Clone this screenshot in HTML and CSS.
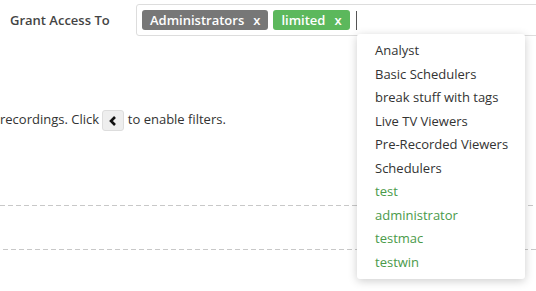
FILE: index.html
```html
<!DOCTYPE html>
<html lang="en">
<head>
    <meta charset="UTF-8">
    <title>Grant Access</title>
    <link rel="stylesheet" href="styles.css">
</head>
<body>

<div class="access-row">
    <label class="access-label">Grant Access To</label>
    <div class="tag-input">
        <span class="tag tag-group">Administrators <span class="tag-x">x</span></span>
        <span class="tag tag-user">limited <span class="tag-x">x</span></span>
        <span class="caret"></span>

        <ul class="dropdown">
            <li>Analyst</li>
            <li>Basic Schedulers</li>
            <li>break stuff with tags</li>
            <li>Live TV Viewers</li>
            <li>Pre-Recorded Viewers</li>
            <li>Schedulers</li>
            <li class="user">test</li>
            <li class="user">administrator</li>
            <li class="user">testmac</li>
            <li class="user">testwin</li>
        </ul>
    </div>
</div>

<p class="hint">recordings. Click <span class="btn-back"><svg width="8" height="10" viewBox="0 0 8 10"><path d="M6 1 L2 5 L6 9" fill="none" stroke="#111" stroke-width="2.6"/></svg></span> to enable filters.</p>

<div class="dash first"></div>
<div class="dash second"></div>

</body>
</html>
```

FILE: styles.css
```css
html, body {
    margin: 0;
    overflow: hidden;
}
body {
    font-family: "Open Sans", sans-serif;
    font-size: 13px;
    color: #333;
    width: 536px;
    height: 291px;
}
.access-row {
    display: flex;
    align-items: center;
    padding-top: 4px;
}
.access-label {
    flex-shrink: 0;
    width: 126px;
    padding-left: 10px;
    font-weight: 600;
    font-size: 13px;
    color: #444;
}
.tag-input {
    position: relative;
    flex-shrink: 0;
    display: flex;
    align-items: center;
    gap: 5px;
    width: 420px;
    height: 32px;
    box-sizing: border-box;
    padding: 0 5px;
    border: 1px solid #ddd;
    border-radius: 3px;
}
.tag {
    display: inline-flex;
    align-items: center;
    height: 20px;
    padding: 0 8px;
    border-radius: 3px;
    color: #fff;
    font-weight: 600;
    font-size: 13px;
}
.tag-x {
    margin-left: 9px;
}
.tag-group {
    background: #777;
}
.tag-user {
    background: #5cb85c;
}
.caret {
    width: 1px;
    height: 19px;
    background: #555;
    margin-left: 1px;
}
.dropdown {
    position: absolute;
    left: 220px;
    top: 29px;
    width: 168px;
    margin: 0;
    padding: 5px 0;
    list-style: none;
    background: #fff;
    border-radius: 3px;
    box-shadow: 0 2px 10px rgba(0, 0, 0, 0.2);
}
.dropdown li {
    height: 23.5px;
    line-height: 23.5px;
    padding-left: 18px;
    color: #333;
}
.dropdown li.user {
    color: #4a9a4a;
}
.hint {
    margin: 73px 0 0;
    line-height: 20px;
    color: #333;
}
.btn-back {
    display: inline-flex;
    align-items: center;
    justify-content: center;
    width: 20px;
    height: 19px;
    vertical-align: middle;
    background: #eee;
    border: 1px solid #ddd;
    border-radius: 3px;
}
.dash {
    height: 1px;
    background: repeating-linear-gradient(to right, #c8c8c8 0 5px, transparent 5px 8px);
}
.first {
    margin-top: 74px;
}
.second {
    margin-top: 43px;
    background-position: 3px 0;
}
```
